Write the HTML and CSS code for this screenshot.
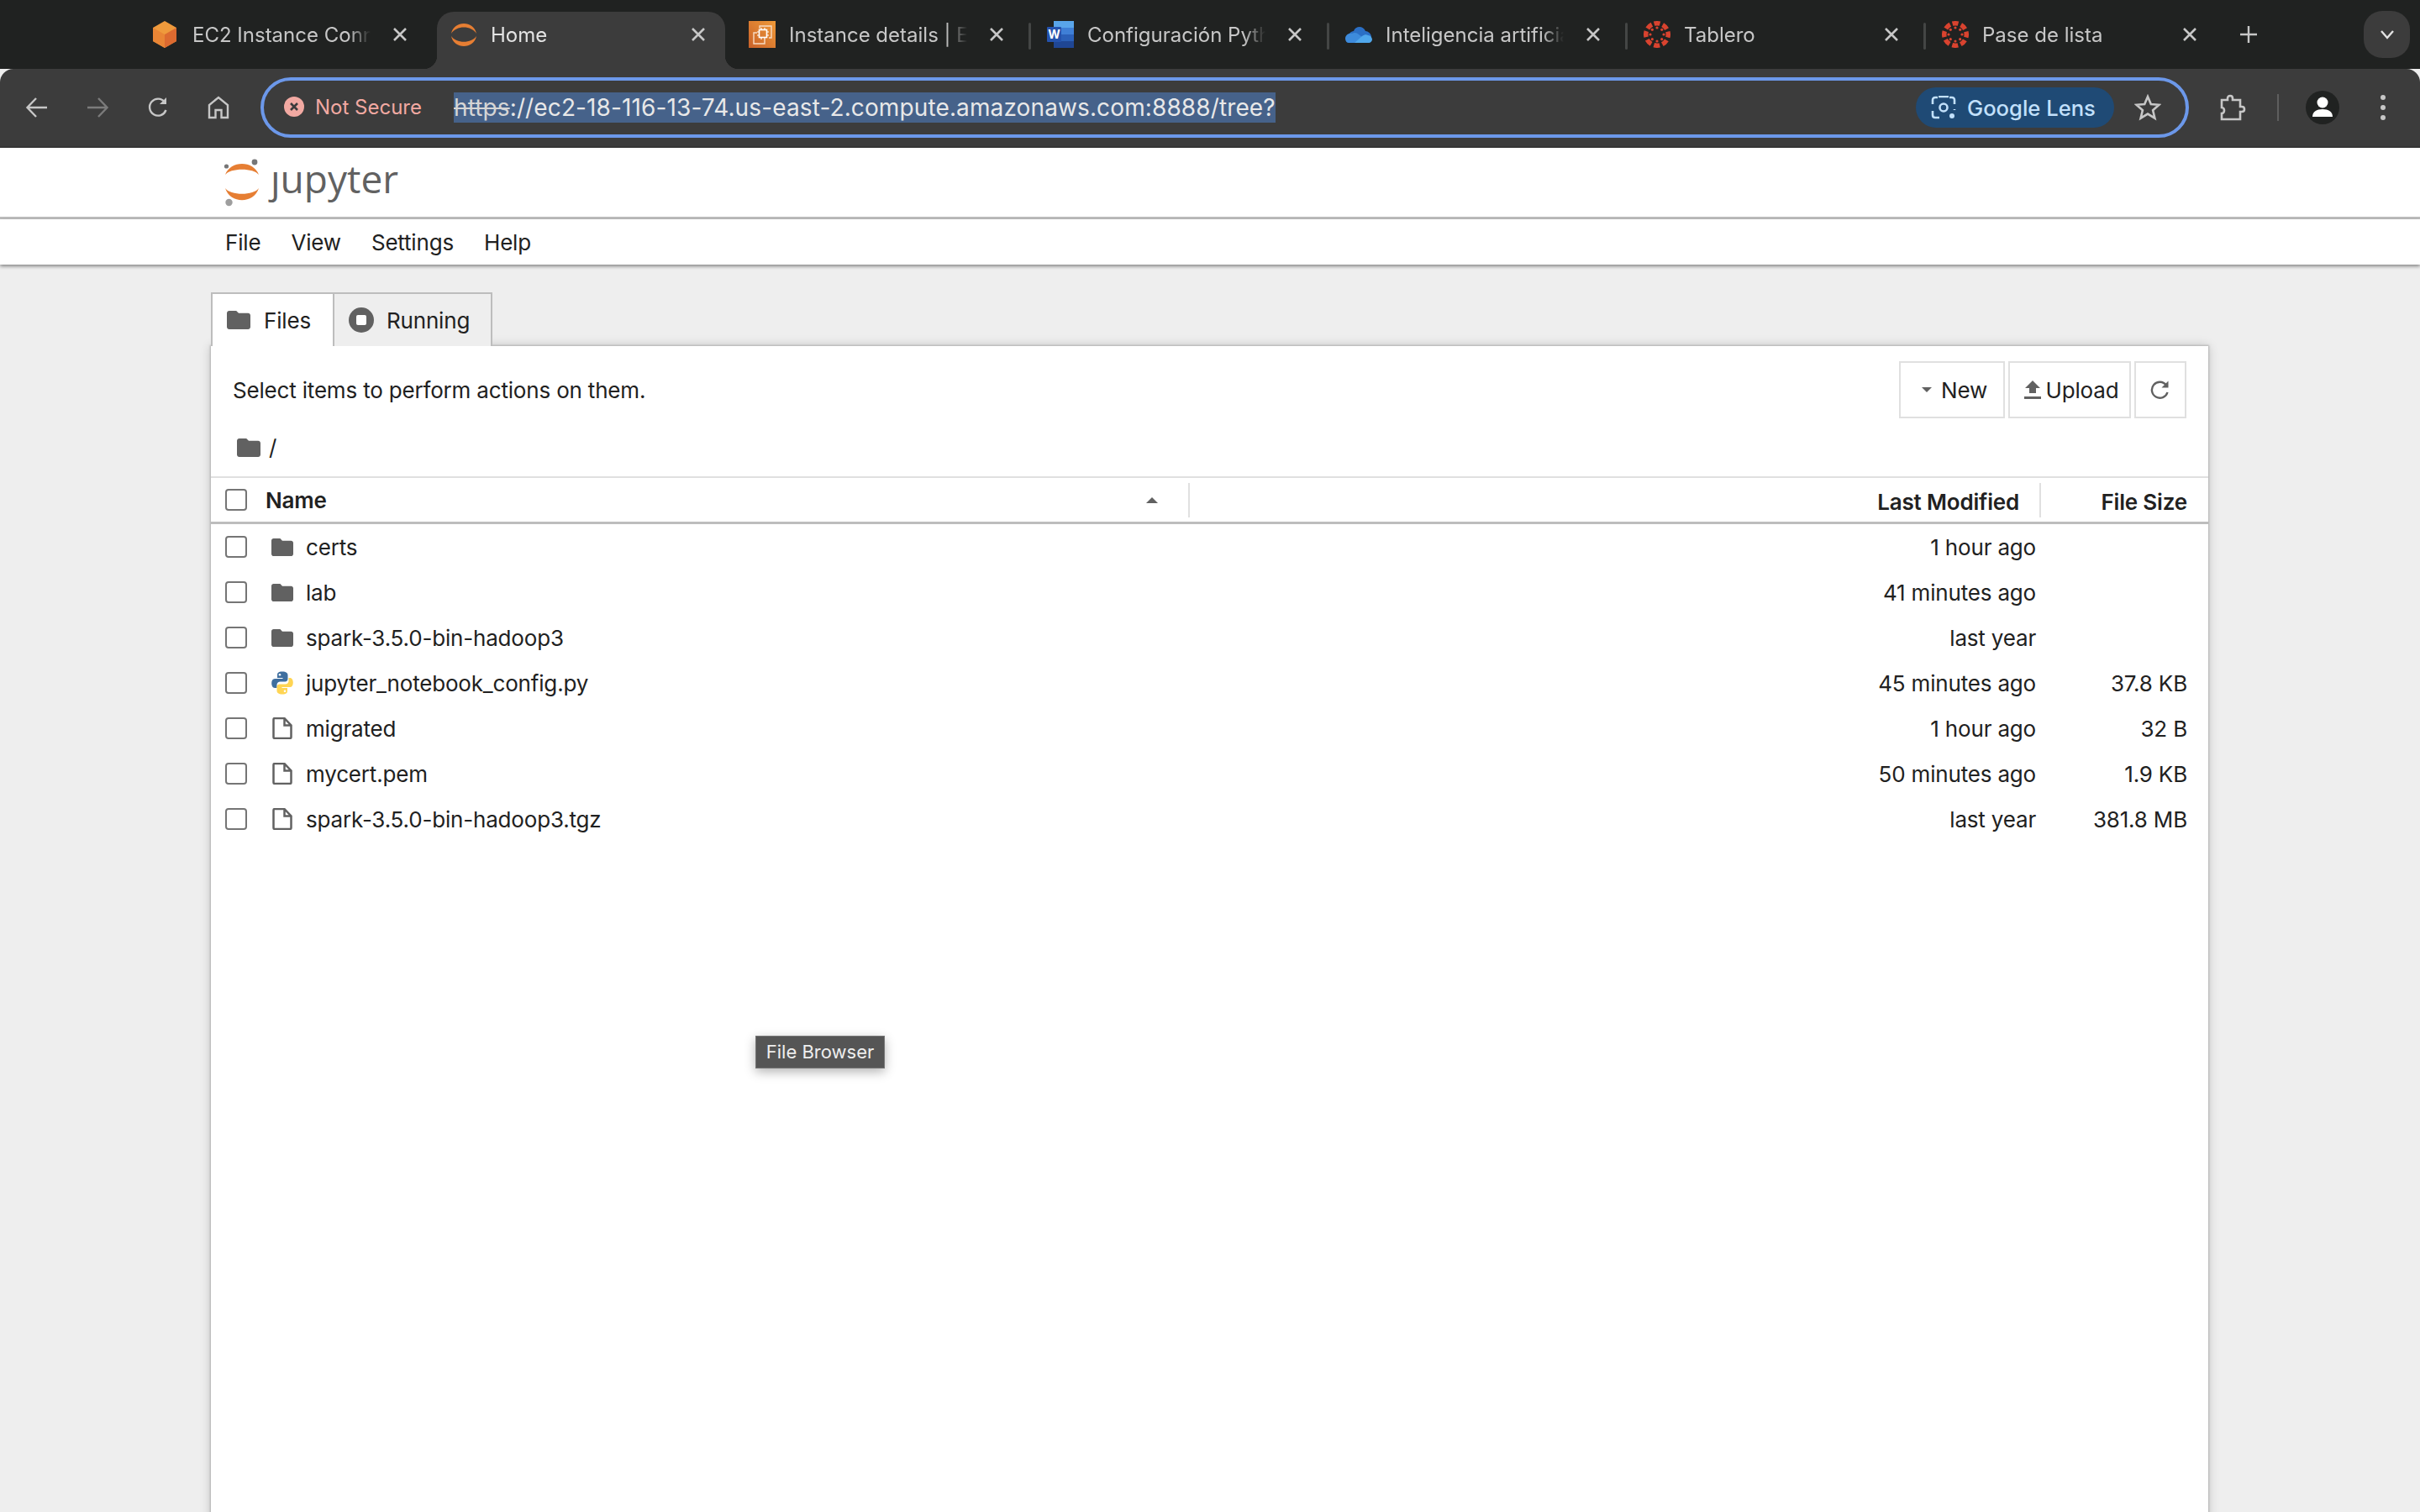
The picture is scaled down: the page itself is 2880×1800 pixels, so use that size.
FILE: index.html
```html
<!DOCTYPE html>
<html lang="en">
	<head>
		<meta http-equiv="Content-Type" content="text/html;charset=utf-8" />
		<title>Home</title>
		<link rel="stylesheet" href="styles.css">
	</head>
	<body>
		<svg class="defs" width="0" height="0">
			<symbol id="folder" viewBox="2 4 20 16" preserveAspectRatio="none"><path d="M10 4H4c-1.1 0-2 .9-2 2v12c0 1.1.9 2 2 2h16c1.1 0 2-.9 2-2V8c0-1.1-.9-2-2-2h-8l-2-2z"/></symbol>
			<symbol id="file" viewBox="0 0 25 26"><path d="M2 2.5c0-.8.6-1.4 1.4-1.4H15l8 8.4v14c0 .8-.6 1.4-1.4 1.4H3.400c-.8 0-1.4-.6-1.400-1.400zM15 1.500v8h8" fill="none" stroke="#616161" stroke-width="2.500"/></symbol>
			<symbol id="close" viewBox="0 0 24 24"><path d="M5 5l14 14M19 5L5 19" fill="none" stroke="#c7c7c7" stroke-width="2.600"/></symbol>
			<symbol id="canvas" viewBox="0 0 32 32">
				<circle cx="16" cy="16" r="13.250" fill="none" stroke="#d9432f" stroke-width="5.500" stroke-dasharray="7 3.400" transform="rotate(-105 16 16)"/>
				<g fill="#d9432f">
					<circle cx="16" cy="8" r="1.600"/><circle cx="16" cy="24" r="1.600"/><circle cx="8" cy="16" r="1.600"/><circle cx="24" cy="16" r="1.600"/>
					<circle cx="10.300" cy="10.300" r="1.600"/><circle cx="21.700" cy="10.300" r="1.600"/><circle cx="10.300" cy="21.700" r="1.600"/><circle cx="21.700" cy="21.700" r="1.600"/>
				</g>
			</symbol>
			<symbol id="jupyter-mark" viewBox="0 0 44 58">
				<path d="M2 20C8 2.500 36 2.500 42 20C36 11.500 8 11.500 2 20z" fill="#e67e33"/>
				<path d="M2 36C8 45 36 45 42 36C36 55 8 55 2 36z" fill="#e67e33"/>
				<circle cx="3.500" cy="10" r="2.600" fill="#767677"/>
				<circle cx="37" cy="5" r="3.400" fill="#767677"/>
				<circle cx="6.500" cy="53" r="4.200" fill="#9e9e9e"/>
			</symbol>
			<symbol id="python" viewBox="0 0 26 28">
				<path d="M13 .5C8 .5 7 2.500 7 4.500V8h6.500v1H4C1.500 9 .2 11.300.2 14.300S1.500 20 4 20h2.500v-3.800c0-2.200 1.900-3.700 4-3.700h5.800c2 0 3.200-1.500 3.200-3.200v-4.800C19.500 2.500 17.500.5 13 .5z" fill="#3f6f9f"/>
				<path d="M13 27.500c5 0 6-2 6-4V20h-6.500v-1H22c2.500 0 3.800-2.300 3.800-5.300S24.500 8 22 8h-1.500v3.800c0 2.200-1.900 3.700-4 3.700H9.700c-2 0-3.200 1.500-3.200 3.200v4.800c0 2 2 4 6.500 4z" fill="#ffd553"/>
				<circle cx="10" cy="4.300" r="1.300" fill="#fff"/><circle cx="16" cy="23.700" r="1.300" fill="#fff"/>
			</symbol>
		</svg>

		<!-- browser chrome -->
		<div class="tabstrip">
			<div class="tab">
				<svg class="favicon" viewBox="0 0 32 32"><path d="M15 0L29 8v16L15 32 1 24V8z" fill="#ef9a3c"/><path d="M15 16L29 8v16L15 32z" fill="#dc6a30"/><path d="M15 16L1 8v16l14 8z" fill="#e98535"/></svg>
				<span class="tab-title">EC2 Instance Connect</span>
				<svg class="tab-close"><use href="#close"/></svg>
			</div>
			<div class="tab active">
				<svg class="favicon" viewBox="0 0 32 32"><path d="M1 15C4 -1 28 -1 31 15C25 5 7 5 1 15z" fill="#e67e33"/><path d="M1 18C7 27 25 27 31 18C28 34 4 34 1 18z" fill="#e67e33"/></svg>
				<span class="tab-title">Home</span>
				<svg class="tab-close"><use href="#close"/></svg>
			</div>
			<div class="tab">
				<svg class="favicon" viewBox="0 0 32 32">
					<defs><linearGradient id="ec2bg" x1="0" y1="1" x2="1" y2="0"><stop offset="0" stop-color="#c8612a"/><stop offset="1" stop-color="#f09a38"/></linearGradient></defs>
					<rect width="32" height="32" fill="url(#ec2bg)"/>
					<path d="M13 9V6h14v14h-3M19 22v5H6V14h4" fill="none" stroke="#f8dcc4" stroke-width="1.400"/>
					<rect x="12.500" y="10.500" width="9" height="9" fill="none" stroke="#fff" stroke-width="1.600"/>
					<path d="M15 8v2M19 8v2M15 20v2M19 20v2M10 13h2M10 17h2M22 13h2M22 17h2" stroke="#fff" stroke-width="1.200"/>
				</svg>
				<span class="tab-title">Instance details | EC2</span>
				<svg class="tab-close"><use href="#close"/></svg>
			</div>
			<div class="tab">
				<svg class="favicon" viewBox="0 0 32 32">
					<rect x="8" y="0" width="24" height="8" fill="#59a5ea"/><rect x="8" y="8" width="24" height="8" fill="#3f7fd6"/><rect x="8" y="16" width="24" height="8" fill="#2b60b8"/><rect x="8" y="24" width="24" height="8" fill="#1f4694"/>
					<rect x="0" y="7" width="17" height="18" rx="1" fill="#2452ad"/>
					<text x="8.500" y="21" class="word-w">W</text>
				</svg>
				<span class="tab-title">Configuración Python</span>
				<svg class="tab-close"><use href="#close"/></svg>
			</div>
			<div class="tab">
				<svg class="favicon" viewBox="0 0 32 32">
					<path d="M5 22C2 16 7 12 10 12 12 6 21 5 24 12c3 0 7 3 7 7z" fill="#2b6fc5"/>
					<path d="M0 21c0-4 4-7 8-6 3-2 6-1 8 1l13 10H4c-2 0-4-2-4-5z" fill="#3d8bdc"/>
					<path d="M11 26l9-8c3-2 5-2 7-1 3 0 5 3 5 5s-2 4-4 4z" fill="#50a8ec"/>
				</svg>
				<span class="tab-title">Inteligencia artificial</span>
				<svg class="tab-close"><use href="#close"/></svg>
			</div>
			<div class="tab">
				<svg class="favicon"><use href="#canvas"/></svg>
				<span class="tab-title">Tablero</span>
				<svg class="tab-close"><use href="#close"/></svg>
			</div>
			<div class="tab">
				<svg class="favicon"><use href="#canvas"/></svg>
				<span class="tab-title">Pase de lista</span>
				<svg class="tab-close"><use href="#close"/></svg>
			</div>
			<svg class="new-tab" viewBox="0 0 22 22"><path d="M11 1v20M1 11h20" stroke="#c7c7c7" stroke-width="2.400"/></svg>
			<div class="tab-search"><svg viewBox="0 0 18 12"><path d="M2 2l7 8 7-8" fill="none" stroke="#e3e3e3" stroke-width="2.400"/></svg></div>
		</div>

		<div class="toolbar">
			<div class="nav-btn"><svg viewBox="0 0 28 28"><path d="M26 14H3M13 3L2.500 14 13 25" fill="none" stroke="#c7c7c7" stroke-width="2.400"/></svg></div>
			<div class="nav-btn"><svg viewBox="0 0 28 28"><path d="M2 14h23M15 3l10.500 11L15 25" fill="none" stroke="#7b7b7b" stroke-width="2.400"/></svg></div>
			<div class="nav-btn"><svg viewBox="0 0 28 28"><path d="M23.500 17a10 10 0 1 1-1.500-9.500" fill="none" stroke="#c7c7c7" stroke-width="2.400"/><path d="M24 2v8h-8z" fill="#c7c7c7"/></svg></div>
			<div class="nav-btn"><svg viewBox="0 0 28 28"><path d="M3 26V11L14 2l11 9v15h-7.500v-9h-7v9z" fill="none" stroke="#c7c7c7" stroke-width="2.400"/></svg></div>
			<div class="omnibox">
				<div class="security">
					<svg viewBox="0 0 24 24"><circle cx="12" cy="12" r="12" fill="#f2a9a2"/><path d="M8 8l8 8M16 8l-8 8" stroke="#3c3c3c" stroke-width="2.600"/></svg>
					<span>Not Secure</span>
				</div>
				<div class="url"><s>https</s>://ec2-18-116-13-74.us-east-2.compute.amazonaws.com:8888/tree?</div>
				<div class="lens">
					<svg viewBox="0 0 30 28"><path d="M9 1h12M2 10V5c0-2 1.500-3 3-3h3M2 18v5c0 2 1.500 3 3 3h5M28 10V5c0-2-1.500-3-3-3h-3M28 16v1" fill="none" stroke="#c2e0fb" stroke-width="2.600"/><circle cx="15" cy="14" r="4.500" fill="none" stroke="#c2e0fb" stroke-width="2.600"/><circle cx="25" cy="24" r="3" fill="#c2e0fb"/></svg>
					<span>Google Lens</span>
				</div>
				<svg class="star" viewBox="0 0 32 32"><path d="M16 3l3.800 9 9.700.8-7.400 6.400 2.300 9.500L16 23.600 7.600 28.700l2.300-9.500L2.500 12.800l9.700-.8z" fill="none" stroke="#c7c7c7" stroke-width="2.600"/></svg>
			</div>
			<svg class="ext-icon" viewBox="0 0 34 32"><path d="M4 7h7V5c0-4 6-4 6 0v2h9v8h2c4 0 4 6 0 6h-2v9H4v-7c4 0 4-7 0-7z" fill="none" stroke="#c7c7c7" stroke-width="2.600"/></svg>
			<div class="tool-divider"></div>
			<div class="avatar"><svg viewBox="0 0 40 40"><circle cx="20" cy="14" r="6.500" fill="#fff"/><path d="M8 31c0-6 5-9 12-9s12 3 12 9z" fill="#fff"/></svg></div>
			<div class="dots"><i></i><i></i><i></i></div>
		</div>

		<!-- page -->
		<div class="jp-header">
			<svg class="jp-mark"><use href="#jupyter-mark"/></svg>
			<span class="jp-word">ȷupyter</span>
		</div>
		<div class="jp-menu">
			<span>File</span>
			<span>View</span>
			<span>Settings</span>
			<span>Help</span>
		</div>

		<div class="jp-main">
			<div class="jp-tabs">
				<div class="jp-tab current">
					<svg class="tab-folder"><use href="#folder"/></svg>
					<span>Files</span>
				</div>
				<div class="jp-tab">
					<svg class="tab-running" viewBox="0 0 30 30"><circle cx="15" cy="15" r="15" fill="#616161"/><rect x="9" y="9" width="12" height="12" rx="2" fill="#fff"/></svg>
					<span>Running</span>
				</div>
			</div>
			<div class="panel">
				<div class="panel-top">
					<div class="hint">Select items to perform actions on them.</div>
					<div class="btn btn-new"><svg viewBox="0 0 12 6"><path d="M0 0h12L6 6z" fill="#616161"/></svg>New</div>
					<div class="btn btn-upload"><svg viewBox="0 0 20 22"><path d="M10 0l9 9h-5v6H6V9H1zM0 19h20v3H0z" fill="#616161"/></svg>Upload</div>
					<div class="btn btn-refresh"><svg viewBox="0 0 24 24"><path d="M20.500 15a9.500 9.500 0 1 1-1.500-8.500" fill="none" stroke="#616161" stroke-width="2.400"/><path d="M21.500 1.500v8h-8z" fill="#616161"/></svg></div>
				</div>
				<div class="crumbs">
					<svg class="crumb-folder"><use href="#folder"/></svg>
					<span>/</span>
				</div>
				<div class="list-head">
					<input class="check" type="checkbox">
					<div class="head-name"><b>Name</b><svg class="sort" viewBox="0 0 14 7"><path d="M0 7h14L7 0z" fill="#616161"/></svg></div>
					<div class="head-mod"><b>Last Modified</b></div>
					<div class="head-size"><b>File Size</b></div>
				</div>
				<div class="row">
					<input class="check" type="checkbox"><svg class="icon folder-icon"><use href="#folder"/></svg>
					<div class="name">certs</div><div class="mod">1 hour ago</div><div class="size"></div>
				</div>
				<div class="row">
					<input class="check" type="checkbox"><svg class="icon folder-icon"><use href="#folder"/></svg>
					<div class="name">lab</div><div class="mod">41 minutes ago</div><div class="size"></div>
				</div>
				<div class="row">
					<input class="check" type="checkbox"><svg class="icon folder-icon"><use href="#folder"/></svg>
					<div class="name">spark-3.5.0-bin-hadoop3</div><div class="mod">last year</div><div class="size"></div>
				</div>
				<div class="row">
					<input class="check" type="checkbox"><svg class="icon py-icon"><use href="#python"/></svg>
					<div class="name">jupyter_notebook_config.py</div><div class="mod">45 minutes ago</div><div class="size">37.8 KB</div>
				</div>
				<div class="row">
					<input class="check" type="checkbox"><svg class="icon file-icon"><use href="#file"/></svg>
					<div class="name">migrated</div><div class="mod">1 hour ago</div><div class="size">32 B</div>
				</div>
				<div class="row">
					<input class="check" type="checkbox"><svg class="icon file-icon"><use href="#file"/></svg>
					<div class="name">mycert.pem</div><div class="mod">50 minutes ago</div><div class="size">1.9 KB</div>
				</div>
				<div class="row">
					<input class="check" type="checkbox"><svg class="icon file-icon"><use href="#file"/></svg>
					<div class="name">spark-3.5.0-bin-hadoop3.tgz</div><div class="mod">last year</div><div class="size">381.8 MB</div>
				</div>
			</div>
		</div>

		<div class="tooltip">File Browser</div>
	</body>
</html>
```

FILE: styles.css
```css
html, body {
	margin: 0;
	height: 1800px;
	overflow: hidden;
}
body {
	position: relative;
	background-color: #eeeeee;
	color: #212121;
	font-family: "Inter", "Liberation Sans", sans-serif;
	font-size: 26px;
	letter-spacing: -0.18px;
}
.defs {
	position: absolute;
}

/* browser chrome */
.tabstrip {
	display: flex;
	align-items: center;
	height: 82px;
	padding-left: 159px;
	box-sizing: border-box;
	background-color: #202221;
	letter-spacing: 0;
}
.tab {
	position: relative;
	display: flex;
	align-items: center;
	flex: 0 0 355px;
	height: 82px;
	padding-left: 22px;
	box-sizing: border-box;
	color: #c7c7c7;
	font-size: 24px;
}
.tab + .tab:not(.active)::before {
	content: "";
	position: absolute;
	left: 0;
	top: 27px;
	width: 3px;
	height: 32px;
	border-radius: 2px;
	background-color: #444645;
}
.tab.active + .tab::before, .tab:nth-child(1)::before {
	display: none;
}
.tab:last-of-type::after {
	content: "";
	position: absolute;
	right: 0;
	top: 27px;
	width: 3px;
	height: 32px;
	border-radius: 2px;
	background-color: #444645;
}
.tab.active {
	margin: 14px 6px 0;
	flex-basis: 343px;
	height: 68px;
	padding-left: 16px;
	padding-bottom: 14px;
	border-radius: 20px 20px 0 0;
	background-color: #3c3c3c;
	color: #e3e3e3;
}
.tab.active::before, .tab.active::after {
	content: "";
	position: absolute;
	bottom: 0;
	width: 16px;
	height: 16px;
}
.tab.active::before {
	left: -16px;
	background: radial-gradient(circle at 0 0, transparent 16px, #3c3c3c 16.500px);
}
.tab.active::after {
	right: -16px;
	background: radial-gradient(circle at 100% 0, transparent 16px, #3c3c3c 16.500px);
}
.favicon {
	flex: none;
	width: 32px;
	height: 32px;
	margin-right: 16px;
}
.word-w {
	fill: #fff;
	font-family: "Inter", sans-serif;
	font-weight: 700;
	font-size: 14px;
	text-anchor: middle;
}
.tab-title {
	flex: 0 0 212px;
	overflow: hidden;
	white-space: nowrap;
	-webkit-mask-image: linear-gradient(90deg, #000 88%, transparent);
	mask-image: linear-gradient(90deg, #000 88%, transparent);
}
.tab-close {
	flex: none;
	width: 24px;
	height: 24px;
	margin-left: 23px;
}
.new-tab {
	flex: none;
	width: 22px;
	height: 22px;
	margin-left: 21px;
}
.tab-search {
	display: flex;
	align-items: center;
	justify-content: center;
	width: 55px;
	height: 56px;
	margin-left: 126px;
	border-radius: 22px;
	background-color: #3c3c3c;
}
.tab-search svg {
	width: 18px;
	height: 12px;
}
.toolbar {
	display: flex;
	align-items: center;
	height: 94px;
	padding-left: 8px;
	box-sizing: border-box;
	border-radius: 16px 16px 0 0;
	border-bottom: 2px solid #363636;
	background-color: #3c3c3c;
	letter-spacing: 0;
}
.nav-btn {
	display: flex;
	justify-content: center;
	width: 72px;
}
.nav-btn svg {
	width: 28px;
	height: 28px;
}
.omnibox {
	display: flex;
	align-items: center;
	width: 2295px;
	height: 72px;
	margin-left: 14px;
	padding: 0 29px 0 24px;
	box-sizing: border-box;
	border: 4px solid #6c98ea;
	border-radius: 36px;
}
.security {
	display: flex;
	align-items: center;
	flex: 0 0 202px;
	height: 36px;
	margin-top: -2px;
	color: #f2a9a2;
	font-size: 24px;
}
.security svg {
	width: 24px;
	height: 24px;
	margin-right: 13px;
}
.url {
	padding: 0;
	line-height: 36px;
	background-color: #46628a;
	color: #e8e8e8;
	font-size: 28px;
	letter-spacing: 0.12px;
	white-space: nowrap;
}
.url s {
	color: #d5d5d5;
}
.lens {
	display: flex;
	align-items: center;
	height: 48px;
	width: 236px;
	margin-left: auto;
	padding-left: 18px;
	box-sizing: border-box;
	border-radius: 24px;
	background-color: #1f4a75;
	color: #c2e0fb;
	font-size: 25.600px;
	font-weight: 500;
}
.lens svg {
	width: 30px;
	height: 28px;
	margin-right: 13px;
}
.star {
	flex: none;
	width: 32px;
	height: 32px;
	margin-left: 24px;
}
.ext-icon {
	flex: none;
	width: 34px;
	height: 32px;
	margin-left: 35px;
}
.tool-divider {
	width: 2px;
	height: 32px;
	margin-left: 36px;
	background-color: #5e5e5e;
}
.avatar {
	width: 40px;
	height: 40px;
	margin-left: 32px;
	border-radius: 50%;
	overflow: hidden;
	background-color: #202221;
}
.avatar svg {
	display: block;
}
.dots {
	display: flex;
	flex-direction: column;
	gap: 6px;
	margin-left: 49px;
}
.dots i {
	display: block;
	width: 6px;
	height: 6px;
	border-radius: 50%;
	background-color: #c7c7c7;
}

/* jupyter header */
.jp-header {
	display: flex;
	align-items: center;
	height: 85px;
	padding-left: 266px;
	box-sizing: border-box;
	border-bottom: 3px solid #bdbdbd;
	background-color: #fff;
}
.jp-mark {
	flex: none;
	width: 44px;
	height: 58px;
}
.jp-word {
	margin: -10px 0 0 12px;
	color: #616161;
	font-family: "Open Sans", sans-serif;
	font-size: 46px;
	letter-spacing: 0;
	line-height: 58px;
}
.jp-menu {
	display: flex;
	align-items: center;
	gap: 36px;
	height: 54px;
	padding-left: 268px;
	background-color: #fff;
	box-shadow: 0 2px 4px rgba(0,0,0,0.45);
	font-size: 26px;
}

/* file browser */
.jp-main {
	width: 2377px;
	margin: 33px 0 0 251px;
}
.jp-tabs {
	position: relative;
	z-index: 1;
	display: flex;
	height: 64px;
}
.jp-tab {
	display: flex;
	align-items: center;
	box-sizing: border-box;
	height: 64px;
	border: 2px solid #bdbdbd;
	border-bottom: 0;
	background-color: #eeeeee;
}
.jp-tab.current {
	width: 145px;
	padding-left: 17px;
	border-right: 0;
	background-color: #fff;
}
.jp-tab:not(.current) {
	width: 190px;
	padding-left: 17px;
}
.tab-folder {
	width: 28px;
	height: 22px;
	margin-right: 16px;
	fill: #616161;
}
.tab-running {
	width: 30px;
	height: 30px;
	margin-right: 15px;
}
.panel {
	height: 1400px;
	background-color: #fff;
	box-shadow: 0 0 2px 1px #b5b5b5, 0 0 12px rgba(0,0,0,0.2);
}
.panel-top {
	display: flex;
	align-items: center;
	height: 68px;
	padding: 18px 26px 0 26px;
}
.hint {
	flex: 1;
}
.btn {
	display: flex;
	align-items: center;
	justify-content: center;
	height: 68px;
	box-sizing: border-box;
	border: 2px solid #e0e0e0;
	margin-left: 4px;
}
.btn-new {
	width: 126px;
	padding-left: 6px;
}
.btn-new svg {
	width: 12px;
	height: 6px;
	margin-right: 11px;
}
.btn-upload {
	width: 146px;
	padding-left: 4px;
}
.btn-upload svg {
	width: 20px;
	height: 22px;
	margin-right: 6px;
}
.btn-refresh { width: 62px; }
.btn-refresh svg {
	width: 24px;
	height: 24px;
}
.crumbs {
	display: flex;
	align-items: center;
	height: 69px;
	padding-left: 31px;
}
.crumb-folder {
	width: 28px;
	height: 22px;
	margin-right: 10px;
	fill: #616161;
}
.list-head {
	display: flex;
	align-items: center;
	height: 57px;
	padding-left: 17px;
	padding-right: 25px;
	box-sizing: border-box;
	border-top: 2px solid #e0e0e0;
	border-bottom: 3px solid #bdbdbd;
}
.list-head b {
	font-weight: 600;
}
.check {
	appearance: none;
	flex: none;
	width: 26px;
	height: 26px;
	margin: 0;
	box-sizing: border-box;
	border: 2px solid #757575;
	border-radius: 4px;
	background-color: #fff;
}
.head-name {
	display: flex;
	align-items: center;
	justify-content: space-between;
	flex: 0 0 1122px;
	height: 41px;
	padding: 0 36px 0 22px;
	box-sizing: border-box;
	border-right: 2px solid #e0e0e0;
}
.sort {
	width: 14px;
	height: 7px;
}
.head-mod {
	flex: 1;
	height: 41px;
	line-height: 45px;
	padding-right: 24px;
	text-align: right;
	border-right: 2px solid #e0e0e0;
}
.head-size {
	width: 174px;
	height: 41px;
	line-height: 45px;
	text-align: right;
}
.row {
	display: flex;
	align-items: center;
	height: 54px;
	padding: 0 25px 0 17px;
}
.icon {
	flex: none;
	width: 26px;
	margin: 0 15px 0 29px;
}
.folder-icon {
	height: 21px;
	fill: #616161;
}
.file-icon {
	height: 26px;
}
.py-icon {
	height: 28px;
}
.name {
	flex: 1;
}
.mod {
	width: 400px;
	text-align: right;
}
.size {
	width: 180px;
	text-align: right;
}

.tooltip {
	position: absolute;
	left: 899px;
	top: 1233px;
	width: 154px;
	height: 39px;
	box-sizing: border-box;
	border: 1px solid #757575;
	background-color: #555555;
	color: #eeeeee;
	font-size: 22px;
	letter-spacing: 0;
	line-height: 37px;
	text-align: center;
	box-shadow: 0 4px 12px rgba(0,0,0,0.3);
}
```
